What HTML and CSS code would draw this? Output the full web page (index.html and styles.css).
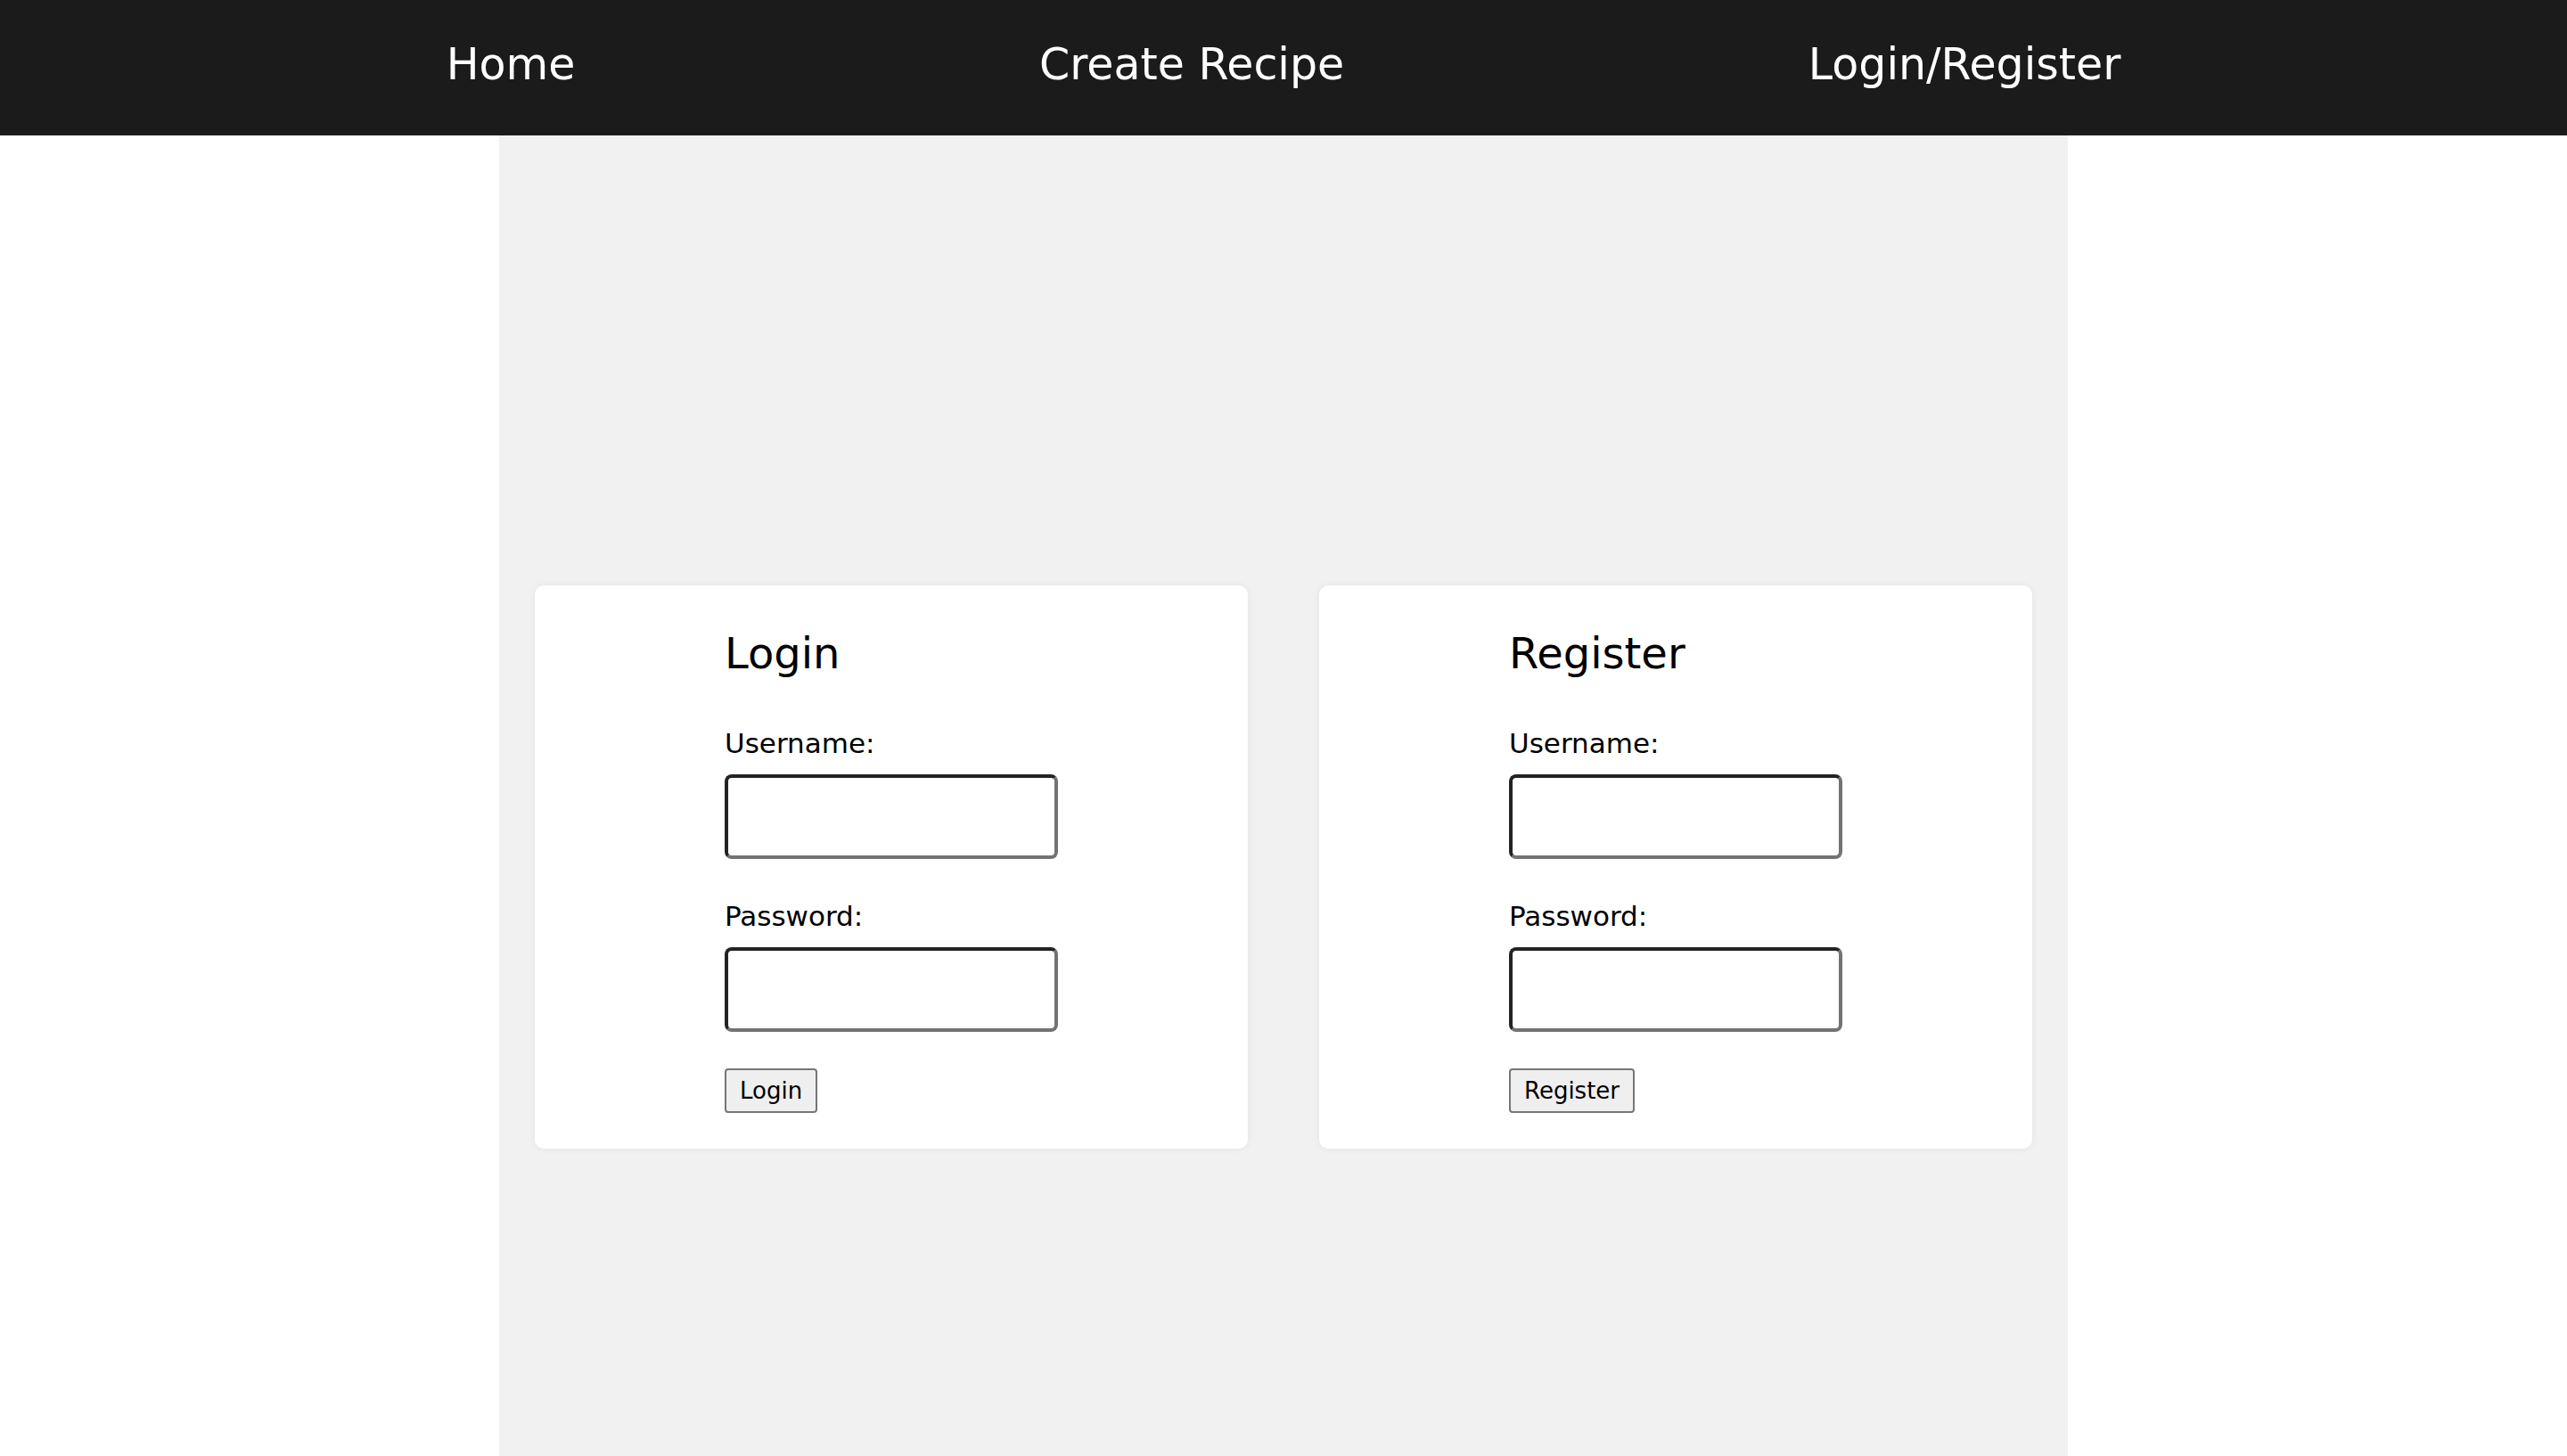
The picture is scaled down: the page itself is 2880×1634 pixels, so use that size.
FILE: index.html
```html
<!DOCTYPE html>
<html lang="en">
<head>
<meta charset="utf-8">
<title>Login / Register</title>
<link rel="stylesheet" href="styles.css">
</head>
<body>
<nav class="navbar">
  <a class="nav-link" href="#">Home</a>
  <a class="nav-link" href="#">Create Recipe</a>
  <a class="nav-link" href="#">Login/Register</a>
</nav>
<main class="auth">
  <section class="card">
    <form class="auth-form">
      <h2 class="title">Login</h2>
      <div class="field">
        <label class="label" for="login-user">Username:</label>
        <input class="input" id="login-user" type="text">
      </div>
      <div class="field">
        <label class="label" for="login-pass">Password:</label>
        <input class="input" id="login-pass" type="password">
      </div>
      <button class="btn" type="button">Login</button>
    </form>
  </section>
  <section class="card">
    <form class="auth-form">
      <h2 class="title">Register</h2>
      <div class="field">
        <label class="label" for="reg-user">Username:</label>
        <input class="input" id="reg-user" type="text">
      </div>
      <div class="field">
        <label class="label" for="reg-pass">Password:</label>
        <input class="input" id="reg-pass" type="password">
      </div>
      <button class="btn" type="button">Register</button>
    </form>
  </section>
</main>
</body>
</html>
```

FILE: styles.css
```css
* {
  box-sizing: border-box;
}

body {
  margin: 0;
  background: #ffffff;
  font-family: "DejaVu Sans", "Noto Sans", sans-serif;
  color: #000000;
}

.navbar {
  height: 152px;
  background: #1b1b1b;
  display: flex;
  align-items: center;
  justify-content: space-evenly;
}

.nav-link {
  display: block;
  padding: 0 20px;
  margin-bottom: 8px;
  font-size: 49px;
  line-height: 57px;
  color: #ffffff;
  text-decoration: none;
}

.auth {
  width: 1760px;
  margin: 0 auto;
  min-height: 100vh;
  background: #f1f1f1;
  padding: 8px 40px 0;
  display: flex;
  align-items: center;
  gap: 80px;
}

.card {
  flex: 1;
  background: #ffffff;
  border-radius: 10px;
  box-shadow: 0 0 8px rgba(0, 0, 0, 0.06);
  padding: 40px 0;
  display: flex;
  justify-content: center;
}

.auth-form {
  width: 374px;
  margin: 0;
}

.title {
  margin: 0;
  font-size: 48px;
  font-weight: 400;
  line-height: 73px;
}

.field {
  margin-top: 44px;
}

.label {
  display: block;
  font-size: 31px;
  line-height: 40px;
}

.input {
  display: block;
  margin-top: 15px;
  width: 374px;
  height: 95px;
  border: 4px solid;
  border-color: #232323 #737373 #737373 #232323;
  border-radius: 8px;
  background: #ffffff;
  padding: 0 10px;
  font-family: inherit;
  font-size: 28px;
  outline: none;
}

.btn {
  display: block;
  margin-top: 41px;
  height: 50px;
  padding: 0 15px;
  border: 2px solid #767676;
  border-radius: 4px;
  background: #efefef;
  font-family: inherit;
  font-size: 26px;
  color: #000000;
  cursor: pointer;
}
```
